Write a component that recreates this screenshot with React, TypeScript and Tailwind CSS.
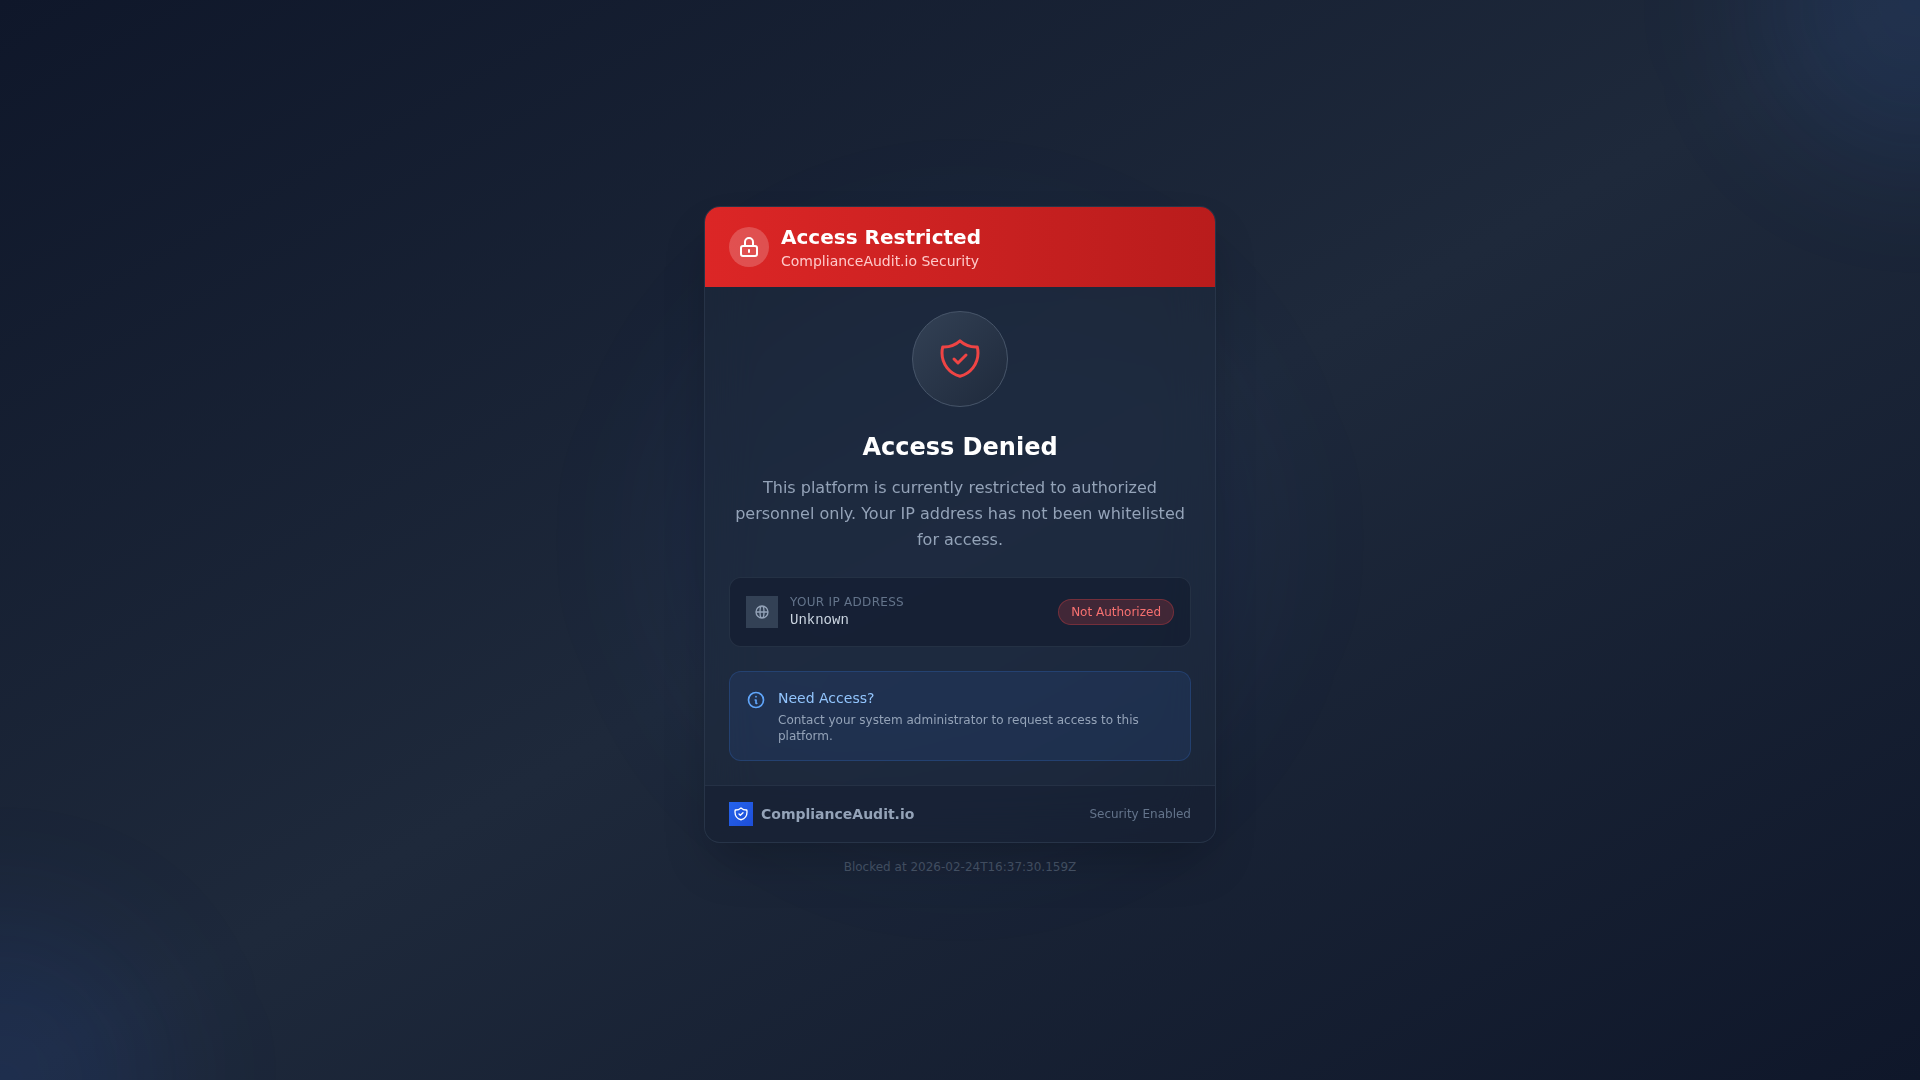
import type { ReactNode } from "react";

const LOCK_PATH =
  "M12 15v2m-6 4h12a2 2 0 002-2v-6a2 2 0 00-2-2H6a2 2 0 00-2 2v6a2 2 0 002 2zm10-10V7a4 4 0 00-8 0v4h8z";
const SHIELD_PATH =
  "M9 12l2 2 4-4m5.618-4.016A11.955 11.955 0 0112 2.944a11.955 11.955 0 01-8.618 3.04A12.02 12.02 0 003 9c0 5.591 3.824 10.29 9 11.622 5.176-1.332 9-6.03 9-11.622 0-1.042-.133-2.052-.382-3.016z";
const GLOBE_PATH =
  "M21 12a9 9 0 01-9 9m9-9a9 9 0 00-9-9m9 9H3m9 9a9 9 0 01-9-9m9 9c1.657 0 3-4.03 3-9s-1.343-9-3-9m0 18c-1.657 0-3-4.03-3-9s1.343-9 3-9m-9 9a9 9 0 019-9";
const INFO_PATH =
  "M13 16h-1v-4h-1m1-4h.01M21 12a9 9 0 11-18 0 9 9 0 0118 0z";

interface IconProps {
  path: string;
  className: string;
  strokeWidth?: number;
}

function Icon({ path, className, strokeWidth = 2 }: IconProps) {
  return (
    <svg
      className={className}
      fill="none"
      stroke="currentColor"
      viewBox="0 0 24 24"
      aria-hidden="true"
    >
      <path
        strokeLinecap="round"
        strokeLinejoin="round"
        strokeWidth={strokeWidth}
        d={path}
      />
    </svg>
  );
}

function Backdrop() {
  return (
    <div className="absolute inset-0 overflow-hidden pointer-events-none">
      <div className="absolute -top-40 -right-40 w-80 h-80 bg-[#3b82f6]/10 rounded-full blur-3xl" />
      <div className="absolute -bottom-40 -left-40 w-80 h-80 bg-[#2563eb]/10 rounded-full blur-3xl" />
      <div className="absolute top-1/2 left-1/2 -translate-x-1/2 -translate-y-1/2 w-[600px] h-[600px] bg-[#2563eb]/5 rounded-full blur-3xl" />
    </div>
  );
}

function Page({ children }: { children: ReactNode }) {
  return (
    <div className="relative min-h-screen flex items-center justify-center p-4 overflow-hidden bg-linear-to-br/srgb from-[#0f172a] via-[#1e293b] to-[#0f172a] font-['DejaVu_Sans',sans-serif]">
      <Backdrop />
      {children}
    </div>
  );
}

export default function App() {
  const ip = "Unknown";
  const blockedAt = "2026-02-24T16:37:30.159Z";

  return (
    <Page>
      <main className="relative w-full max-w-lg">
        <div className="bg-[#1e293b]/50 backdrop-blur-xl border border-[#334155]/50 rounded-2xl shadow-2xl overflow-hidden">
          {/* Header */}
          <div className="bg-linear-to-r/srgb from-[#dc2626] to-[#b91c1c] px-6 py-4 flex items-center gap-3">
            <div className="w-10 h-10 rounded-full bg-white/20 flex items-center justify-center">
              <Icon path={LOCK_PATH} className="w-6 h-6 text-white" />
            </div>
            <div>
              <h1 className="text-xl font-bold text-white">Access Restricted</h1>
              <p className="text-sm text-[#fecaca]">
                ComplianceAudit.io Security
              </p>
            </div>
          </div>

          {/* Content */}
          <div className="p-6">
            <div className="flex justify-center mb-6">
              <div className="w-24 h-24 rounded-full bg-linear-to-br/srgb from-[#334155] to-[#1e293b] border border-[#475569] flex items-center justify-center">
                <Icon
                  path={SHIELD_PATH}
                  strokeWidth={1.5}
                  className="w-12 h-12 text-[#ef4444]"
                />
              </div>
            </div>

            <div className="text-center mb-6">
              <h2 className="text-2xl font-bold text-white mb-3">
                Access Denied
              </h2>
              <p className="text-base leading-[26px] text-[#94a3b8]">
                This platform is currently restricted to authorized personnel
                only. Your IP address has not been whitelisted for access.
              </p>
            </div>

            {/* IP address */}
            <div className="mb-6 flex items-center justify-between rounded-xl border border-[#334155]/50 bg-[#0f172a]/50 p-4">
              <div className="flex items-center gap-3">
                <div className="w-8 h-8 bg-[#334155] flex items-center justify-center">
                  <Icon path={GLOBE_PATH} className="w-4 h-4 text-[#94a3b8]" />
                </div>
                <div>
                  <p className="text-xs uppercase tracking-wide text-[#64748b]">
                    Your IP Address
                  </p>
                  <p className="text-sm font-['Liberation_Mono',monospace] text-[#cbd5e1]">
                    {ip}
                  </p>
                </div>
              </div>
              <span className="rounded-full border border-[#ef4444]/30 bg-[#ef4444]/20 px-3 py-1 text-xs text-[#f87171]">
                Not Authorized
              </span>
            </div>

            {/* Help */}
            <div className="flex items-start gap-3 rounded-xl border border-[#3b82f6]/20 bg-[#3b82f6]/10 p-4">
              <Icon
                path={INFO_PATH}
                className="w-5 h-5 mt-0.5 shrink-0 text-[#60a5fa]"
              />
              <div>
                <p className="text-sm text-[#93c5fd] mb-1">Need Access?</p>
                <p className="text-xs text-[#94a3b8]">
                  Contact your system administrator to request access to this
                  platform.
                </p>
              </div>
            </div>
          </div>

          {/* Footer */}
          <div className="flex items-center justify-between border-t border-[#334155]/50 bg-[#0f172a]/30 px-6 py-4">
            <div className="flex items-center gap-2">
              <div className="w-6 h-6 bg-linear-to-br/srgb from-[#2563eb] to-[#1d4ed8] flex items-center justify-center">
                <Icon path={SHIELD_PATH} className="w-4 h-4 text-white" />
              </div>
              <span className="text-sm font-semibold text-[#94a3b8]">
                ComplianceAudit.io
              </span>
            </div>
            <span className="text-xs text-[#64748b]">Security Enabled</span>
          </div>
        </div>

        <p className="mt-4 text-center text-xs text-[#475569]">
          Blocked at {blockedAt}
        </p>
      </main>
    </Page>
  );
}
